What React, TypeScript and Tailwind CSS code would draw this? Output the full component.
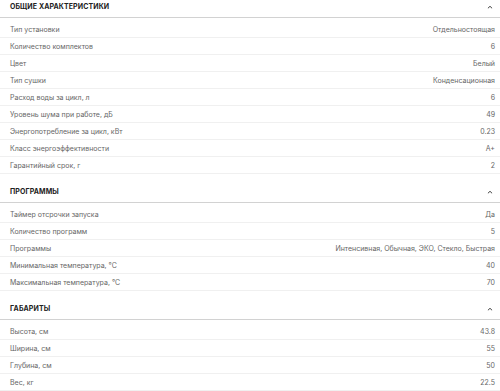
const sections = [
  {
    title: "Общие характеристики",
    rows: [
      ["Тип установки", "Отдельностоящая"],
      ["Количество комплектов", "6"],
      ["Цвет", "Белый"],
      ["Тип сушки", "Конденсационная"],
      ["Расход воды за цикл, л", "6"],
      ["Уровень шума при работе, дБ", "49"],
      ["Энергопотребление за цикл, кВт", "0.23"],
      ["Класс энергоэффективности", "A+"],
      ["Гарантийный срок, г", "2"],
    ],
  },
  {
    title: "Программы",
    rows: [
      ["Таймер отсрочки запуска", "Да"],
      ["Количество программ", "5"],
      ["Программы", "Интенсивная, Обычная, ЭКО, Стекло, Быстрая"],
      ["Минимальная температура, °C", "40"],
      ["Максимальная температура, °C", "70"],
    ],
  },
  {
    title: "Габариты",
    rows: [
      ["Высота, см", "43.8"],
      ["Ширина, см", "55"],
      ["Глубина, см", "50"],
      ["Вес, кг", "22.5"],
    ],
  },
];

function ChevronUp() {
  return (
    <svg width="6" height="4" viewBox="0 0 6 4" fill="none" className="text-[#444]">
      <path d="M1.2 3L3 1.3L4.8 3" stroke="currentColor" strokeWidth="1" strokeLinecap="round" />
    </svg>
  );
}

export default function App() {
  return (
    <div
      className="w-[500px] h-[391px] overflow-hidden bg-white"
      style={{ fontFamily: "Inter, 'Noto Sans', sans-serif" }}
    >
      <div className="-mt-[11px]">
        {sections.map((section) => (
          <section key={section.title}>
            {/* Section header */}
            <div className="h-[29px] flex items-end justify-between pl-[10px] pr-[7px] pb-[6px] border-b border-[#d2d2d2]">
              <h3 className="text-[7px] leading-[9px] font-bold uppercase text-[#222] tracking-[0.1px]">
                {section.title}
              </h3>
              <span className="mb-[2px]">
                <ChevronUp />
              </span>
            </div>
            {/* Rows */}
            <div className="pt-[3px]">
              {section.rows.map(([label, value]) => (
                <div
                  key={label}
                  className="h-[17px] flex items-center justify-between pl-[10px] pr-[5px] border-b border-[#f0f0f0]"
                >
                  <span className="text-[7px] leading-[9px] text-[#666]">{label}</span>
                  <span className="text-[7px] leading-[9px] text-[#666]">{value}</span>
                </div>
              ))}
            </div>
          </section>
        ))}
      </div>
    </div>
  );
}
